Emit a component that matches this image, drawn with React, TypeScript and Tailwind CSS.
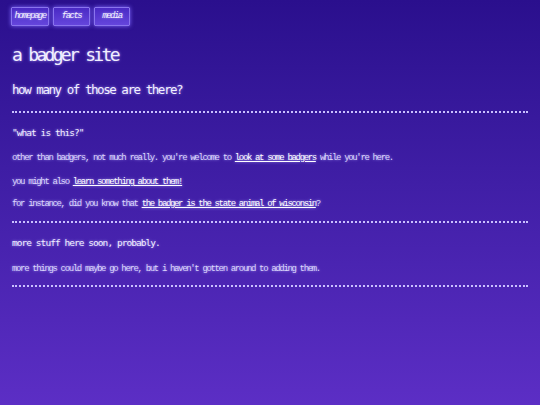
export default function App() {
  const glow = "[text-shadow:0_0_3px_rgba(180,168,255,0.85)]";
  const lib = "font-['Liberation_Mono','DejaVu_Sans_Mono',monospace]";
  const dv = "font-['DejaVu_Sans_Mono','Liberation_Mono',monospace]";
  const body = `${lib} text-[9px] leading-[12px] tracking-[-1.35px] text-[#dcd6fb] ${glow}`;
  const h3 = `${dv} text-[9.5px] leading-[12px] tracking-[-0.95px] text-[#f2efff] ${glow}`;
  const navs: [string, string][] = [["homepage", "w-[38px]"], ["facts", "w-[37px]"], ["media", "w-[36px]"]];
  return (
    <div className={`min-h-[405px] bg-linear-to-b from-[#2a0f8d] to-[#5c2ec5] pl-[12px] pr-[12px] pt-[7px] pb-10 text-[#ece8ff] ${lib}`}>
      <nav className="flex gap-[4px] -ml-px">
        {navs.map(([n, w]) => (
          <a key={n} className={`${w} h-[19px] flex items-center justify-center border border-[#8a74ee] rounded-[1px] bg-linear-to-b from-[#4a29c4] to-[#6545dc] shadow-[0_0_4px_#7f68ff] text-[9px] italic tracking-[-1.5px] text-[#f4f1ff] ${glow}`}>
            {n}
          </a>
        ))}
      </nav>

      <h1 className={`${dv} mt-[19px] text-[18px] leading-[20px] tracking-[-2.7px] text-[#f2efff] ${glow}`}>a badger site</h1>
      <h2 className={`${dv} mt-[17px] text-[12.5px] leading-[16px] tracking-[-1.45px] text-[#f2efff] ${glow}`}>how many of those are there?</h2>

      <div className="mt-[13px] border-t-2 border-dotted border-[#c9c0ff]" />

      <h3 className={`mt-[14px] ${h3}`}>"what is this?"</h3>
      <p className={`mt-[13px] ${body}`}>
        other than badgers, not much really. you're welcome to <a className="underline text-white">look at some badgers</a> while you're here.
      </p>
      <p className={`mt-[12px] ${body}`}>
        you might also <a className="underline text-white">learn something about them!</a>
      </p>
      <p className={`mt-[10px] ${body}`}>
        for instance, did you know that <a className="underline text-white">the badger is the state animal of wisconsin</a>?
      </p>

      <div className="mt-[11px] border-t-2 border-dotted border-[#c9c0ff]" />

      <h3 className={`mt-[14px] ${h3}`}>more stuff here soon, probably.</h3>
      <p className={`mt-[14px] ${body}`}>
        more things could maybe go here, but i haven't gotten around to adding them.
      </p>

      <div className="mt-[10px] border-t-2 border-dotted border-[#c9c0ff]" />
    </div>
  );
}
